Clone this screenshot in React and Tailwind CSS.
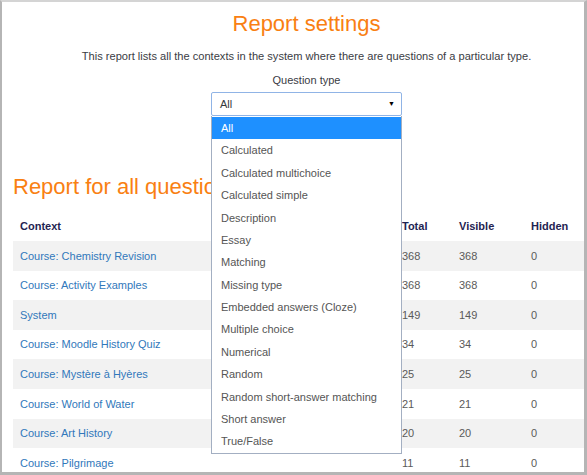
const questionTypes = [
  'All',
  'Calculated',
  'Calculated multichoice',
  'Calculated simple',
  'Description',
  'Essay',
  'Matching',
  'Missing type',
  'Embedded answers (Cloze)',
  'Multiple choice',
  'Numerical',
  'Random',
  'Random short-answer matching',
  'Short answer',
  'True/False',
]

const rows = [
  { name: 'Course: Chemistry Revision', total: 368, visible: 368, hidden: 0 },
  { name: 'Course: Activity Examples', total: 368, visible: 368, hidden: 0 },
  { name: 'System', total: 149, visible: 149, hidden: 0 },
  { name: 'Course: Moodle History Quiz', total: 34, visible: 34, hidden: 0 },
  { name: 'Course: Mystère à Hyères', total: 25, visible: 25, hidden: 0 },
  { name: 'Course: World of Water', total: 21, visible: 21, hidden: 0 },
  { name: 'Course: Art History', total: 20, visible: 20, hidden: 0 },
  { name: 'Course: Pilgrimage', total: 11, visible: 11, hidden: 0 },
]

export default function App() {
  return (
    <div
      className="w-[587px] h-[475px] overflow-hidden bg-white border-l-2 border-t-2 border-r-[3px] border-b-[3px] border-[#b5b5b5] border-t-[#d4d4d4]"
      style={{ fontFamily: '"Liberation Sans", Arial, sans-serif' }}
    >
      <div className="ml-[11px] w-[587px]">
        <h2 className="mt-[9px] text-center text-[22px] leading-[26px] text-[#f98012]">Report settings</h2>
        <p className="mt-[11px] text-center text-[11.1px] leading-[16px] text-[#3a3c44]">
          This report lists all the contexts in the system where there are questions of a particular type.
        </p>
        <div className="mt-[8px] text-center text-[11px] leading-[16px] text-[#3a3c44]">Question type</div>

        <div className="relative mx-auto mt-[4px] w-[191px]">
          <div className="flex h-[24px] items-center justify-between rounded-[2px] border border-[#90b4e6] bg-white pl-[8px] pr-[6px] text-[11px] text-[#373a3c]">
            <span>All</span>
            <span className="text-[7px] text-black">▼</span>
          </div>
          <div className="absolute left-0 top-[24px] z-10 w-[191px] border-x border-b border-[#a3afc2] bg-white pt-[1px]">
            {questionTypes.map((t, i) => (
              <div
                key={t}
                className={
                  i === 0
                    ? 'flex h-[22.4px] items-center bg-[#1e90ff] pl-[9px] text-[11px] text-white'
                    : 'flex h-[22.4px] items-center pl-[9px] text-[11px] text-[#555555]'
                }
              >
                {t}
              </div>
            ))}
          </div>
        </div>

        <h2 className="mt-[58px] text-[22px] leading-[26px] text-[#f98012] whitespace-nowrap">Report for all questions</h2>

        <table className="mt-[12px] w-full border-collapse text-[11px]">
          <thead>
            <tr className="h-[29px] text-left text-[#1f2452]">
              <th className="w-[382px] pl-[7px] font-bold">Context</th>
              <th className="w-[57px] pl-[7px] font-bold">Total</th>
              <th className="w-[72px] pl-[7px] font-bold">Visible</th>
              <th className="pl-[7px] font-bold">Hidden</th>
            </tr>
          </thead>
          <tbody>
            {rows.map((r, i) => (
              <tr key={r.name} className={i % 2 === 0 ? 'h-[29.6px] bg-[#f2f2f2]' : 'h-[29.6px] bg-white'}>
                <td className="pl-[7px] text-[#3178bb]">{r.name}</td>
                <td className="pl-[7px] text-[#5a5a5a]">{r.total}</td>
                <td className="pl-[7px] text-[#5a5a5a]">{r.visible}</td>
                <td className="pl-[7px] text-[#5a5a5a]">{r.hidden}</td>
              </tr>
            ))}
          </tbody>
        </table>
      </div>
    </div>
  )
}
